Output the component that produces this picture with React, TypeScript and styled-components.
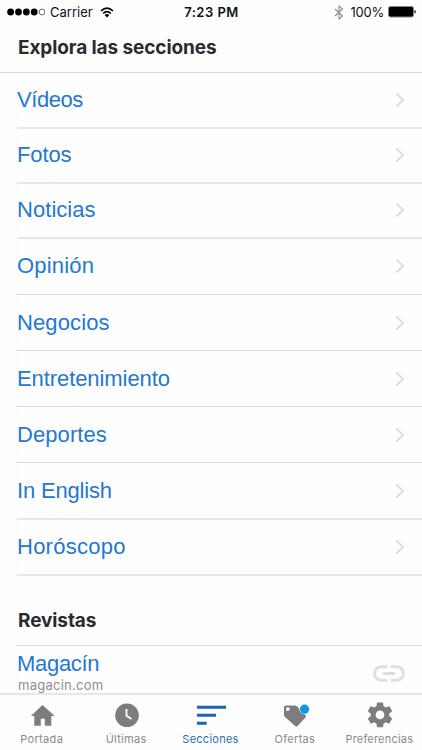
import React from "react";
import styled, { createGlobalStyle } from "styled-components";

const Global = createGlobalStyle`
  * { box-sizing: border-box; }
  body { margin: 0; background: #fff; font-family: Inter, sans-serif; overflow: hidden; }
`;

const Screen = styled.div`
  width: 422px;
  height: 750px;
  display: flex;
  flex-direction: column;
  background: #fefefe;
  overflow: hidden;
`;

const StatusBar = styled.header`
  height: 24px;
  flex: none;
  display: grid;
  grid-template-columns: 1fr auto 1fr;
  align-items: center;
  padding: 0 6px 0 7px;
  font-size: 13px;
  line-height: 24px;
  color: #111;
`;

const StatusLeft = styled.div`
  display: flex;
  align-items: center;
`;

const StatusRight = styled.div`
  display: flex;
  align-items: center;
  justify-content: flex-end;
`;

const Carrier = styled.span`
  margin: 0 7px 0 5px;
`;

const Clock = styled.time`
  font-weight: 600;
  letter-spacing: 0.5px;
`;

const Percent = styled.span`
  margin: 0 4px 0 7px;
  letter-spacing: -0.25px;
`;

const SectionTitle = styled.h2<{ $height: number; $top: number }>`
  margin: 0;
  flex: none;
  height: ${(p) => p.$height}px;
  padding: ${(p) => p.$top}px 0 0 18px;
  font-size: 19px;
  font-weight: 700;
  line-height: 24px;
  letter-spacing: -0.1px;
  color: #2b2b2d;
`;

const List = styled.ul`
  list-style: none;
  margin: 0;
  padding: 0 0 0 17px;
  flex: none;
  border-top: 1px solid #dcdcde;
`;

const Row = styled.li<{ $height: number; $thick?: boolean; $raised?: boolean }>`
  height: ${(p) => p.$height}px;
  display: flex;
  align-items: center;
  justify-content: space-between;
  padding: 0 16px ${(p) => (p.$raised ? 2 : 0)}px 0;
  border-bottom: ${(p) => (p.$thick ? "2px solid #e7e7e8" : "1px solid #d9d9db")};
  box-shadow: inset 1px 0 #fafafb;
`;

const RowLabel = styled.span<{ $spacing: number }>`
  font: 22px/26px "Liberation Sans", Arial, sans-serif;
  letter-spacing: ${(p) => p.$spacing}px;
  color: #2478d2;
`;

const MagazineRow = styled.div`
  margin-left: 17px;
  height: 48px;
  flex: none;
  display: flex;
  justify-content: space-between;
  padding: 5px 17px 0 0;
  border-top: 1px solid #d9d9db;
  box-shadow: inset 1px 0 #fafafb;
`;

const MagazineText = styled.div`
  display: flex;
  flex-direction: column;
`;

const Domain = styled.span`
  padding-left: 1px;
  font-size: 13px;
  line-height: 16px;
  letter-spacing: 0.25px;
  color: #8e8e90;
`;

const LinkIcon = styled.svg`
  margin-top: 14px;
`;

const TabBar = styled.nav`
  height: 57px;
  flex: none;
  display: grid;
  grid-template-columns: repeat(5, 1fr);
  border-top: 2px solid #e6e6e8;
  background: #fdfdfe;
`;

const Tab = styled.div<{ $active?: boolean }>`
  display: flex;
  flex-direction: column;
  align-items: center;
  color: ${(p) => (p.$active ? "#2470b8" : "#8a8a8c")};
  svg { margin-top: 8px; overflow: visible; }
`;

const TabLabel = styled.span<{ $spacing: number }>`
  font-size: 11px;
  line-height: 14px;
  margin-top: 5px;
  padding-right: 1px;
  letter-spacing: ${(p) => p.$spacing}px;
  white-space: nowrap;
`;

const sections = [
  { name: "Vídeos", height: 56, spacing: -0.45, thick: true },
  { name: "Fotos", height: 55, spacing: -0.1, thick: true, raised: true },
  { name: "Noticias", height: 55, spacing: 0.05, thick: true, raised: true },
  { name: "Opinión", height: 56, spacing: 0.2, raised: true },
  { name: "Negocios", height: 56, spacing: 0.12 },
  { name: "Entretenimiento", height: 56, spacing: -0.08 },
  { name: "Deportes", height: 56, spacing: 0.08 },
  { name: "In English", height: 57, spacing: -0.18, thick: true },
  { name: "Horóscopo", height: 56, spacing: 0.25, thick: true },
];

const Chevron = () => (
  <svg width="12" height="16" viewBox="0 0 12 16" fill="none" stroke="#dcdde1" strokeWidth="2">
    <path d="M2.500 1.500 9 8l-6.500 6.500" />
  </svg>
);

const Signal = () => (
  <svg width="38" height="8" viewBox="0 0 38 8">
    {[3.6, 11.5, 19.4, 27.2].map((x) => (
      <circle key={x} cx={x} cy="4" r="3.4" fill="#000" />
    ))}
    <circle cx="35" cy="4" r="2.9" fill="none" stroke="#444" strokeWidth="0.8" />
  </svg>
);

const Wifi = () => (
  <svg width="14" height="11" viewBox="0 0 14 11" fill="none" stroke="#000" strokeWidth="1.700">
    <path d="M1 4Q7-1.600 13 4M3.100 6.500Q7 2.900 10.900 6.500" />
    <path d="M4.600 8Q7 5.900 9.400 8L7 10.400Z" fill="#000" stroke="none" />
  </svg>
);

const Bluetooth = () => (
  <svg width="10" height="15" viewBox="0 0 10 15" fill="none" stroke="#8c8c8c" strokeWidth="1.100">
    <path d="M1 4l7.500 7L5 14V1l3.500 3L1 11" />
  </svg>
);

const Battery = () => (
  <svg width="28" height="12" viewBox="0 0 28 12">
    <rect x="0.500" y="0.500" width="25" height="10.500" rx="2" fill="#000" stroke="#888" />
    <path d="M26.500 4q1.300.3 1.300 1.800t-1.300 1.800z" fill="#000" />
  </svg>
);

const HomeIcon = () => (
  <svg width="24" height="24" viewBox="0 0 24 24" fill="#7d7d7f">
    <path d="M12.500 2 24.700 13H21.300v9.800h-6.500v-7h-4v7H4.300V13H.900z" />
  </svg>
);

const ClockIcon = () => (
  <svg width="24" height="24" viewBox="0 0 24 24">
    <circle cx="12" cy="12.300" r="11.800" fill="#7d7d7f" />
    <path d="M11.500 6v6.800l5 3.200" fill="none" stroke="#fff" strokeWidth="1.900" />
  </svg>
);

const SectionsIcon = () => (
  <svg width="30" height="24" viewBox="0 0 30 24" fill="#1d64a8">
    <path d="M1 2.700h29v3H1zM1 10.700h19v3H1zM1 18.700h9.700v3H1z" />
  </svg>
);

const OffersIcon = () => (
  <svg width="24" height="24" viewBox="0 0 24 24">
    <path
      fillRule="evenodd"
      fill="#7d7d7f"
      d="M3 2.500h9q1 0 1.800.8L22.500 12q1.300 1.300 0 2.600L14.500 23q-1.200 1.200-2.400 0L2 14Q1 13 1 12V4.500q0-2 2-2zM4.800 4.200a1.900 1.900 0 1 0 .01 0z"
    />
    <circle cx="21.500" cy="6.200" r="5.100" fill="#fdfdfe" />
    <circle cx="21.500" cy="6.200" r="4.600" fill="#0b98e5" />
  </svg>
);

const GearIcon = () => (
  <svg width="28" height="24" viewBox="1.500 2.400 21 19.400" fill="#7d7d7f">
    <path d="M19.430 12.980c.04-.32.07-.64.07-.98s-.03-.66-.07-.98l2.110-1.650c.19-.15.24-.42.12-.64l-2-3.460c-.12-.22-.39-.3-.61-.22l-2.490 1c-.52-.4-1.080-.73-1.690-.98l-.38-2.650C14.460 2.180 14.250 2 14 2h-4c-.25 0-.46.18-.49.42l-.38 2.650c-.61.25-1.170.59-1.690.98l-2.490-1c-.23-.09-.49 0-.61.22l-2 3.460c-.13.22-.07.49.12.64l2.110 1.650c-.04.32-.07.65-.07.98s.03.66.07.98l-2.110 1.650c-.19.15-.24.42-.12.64l2 3.460c.12.22.39.3.61.22l2.490-1c.52.4 1.080.73 1.690.98l.38 2.650c.03.24.24.42.49.42h4c.25 0 .46-.18.49-.42l.38-2.650c.61-.25 1.170-.59 1.690-.98l2.490 1c.23.09.49 0 .61-.22l2-3.460c.12-.22.07-.49-.12-.64zM12 15.500A3.500 3.500 0 1 1 12 8.500a3.500 3.500 0 0 1 0 7z" />
  </svg>
);

const tabs = [
  { label: "Portada", icon: <HomeIcon />, spacing: 0.35 },
  { label: "Últimas", icon: <ClockIcon />, spacing: 0.28 },
  { label: "Secciones", icon: <SectionsIcon />, spacing: 0.25, active: true },
  { label: "Ofertas", icon: <OffersIcon />, spacing: 0.3 },
  { label: "Preferencias", icon: <GearIcon />, spacing: 0.2 },
];

export default function App() {
  return (
    <Screen>
      <Global />
      <StatusBar>
        <StatusLeft>
          <Signal />
          <Carrier>Carrier</Carrier>
          <Wifi />
        </StatusLeft>
        <Clock>7:23 PM</Clock>
        <StatusRight>
          <Bluetooth />
          <Percent>100%</Percent>
          <Battery />
        </StatusRight>
      </StatusBar>
      <SectionTitle $height={48} $top={12}>Explora las secciones</SectionTitle>
      <List>
        {sections.map((s) => (
          <Row key={s.name} $height={s.height} $thick={s.thick} $raised={s.raised}>
            <RowLabel $spacing={s.spacing}>{s.name}</RowLabel>
            <Chevron />
          </Row>
        ))}
      </List>
      <SectionTitle $height={69} $top={33}>Revistas</SectionTitle>
      <MagazineRow>
        <MagazineText>
          <RowLabel $spacing={-0.3}>Magacín</RowLabel>
          <Domain>magacin.com</Domain>
        </MagazineText>
        <LinkIcon width="32" height="17" viewBox="0 0 32 17" fill="none" stroke="#dedfe4" strokeWidth="3">
          <path d="M14.500 1.700H8.300a6.800 6.800 0 0 0 0 13.600h6.200M17.500 1.700h6.200a6.800 6.800 0 0 1 0 13.600h-6.200M10 8.500h12" />
        </LinkIcon>
      </MagazineRow>
      <TabBar>
        {tabs.map((t) => (
          <Tab key={t.label} $active={t.active}>
            {t.icon}
            <TabLabel $spacing={t.spacing}>{t.label}</TabLabel>
          </Tab>
        ))}
      </TabBar>
    </Screen>
  );
}
